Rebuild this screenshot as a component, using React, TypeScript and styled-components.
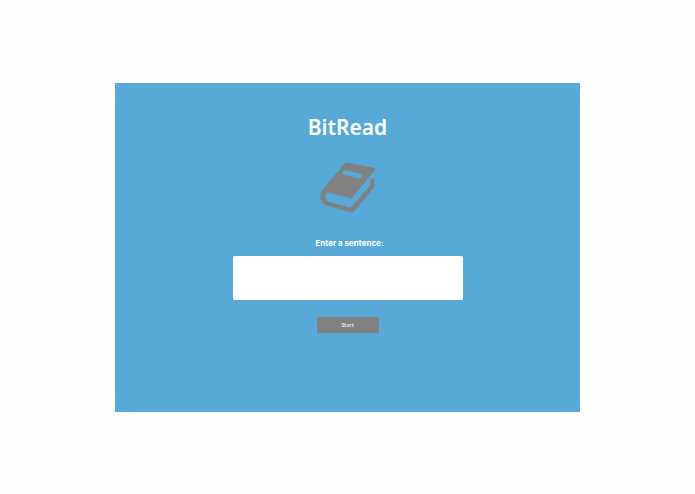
import React from "react";
import styled, { createGlobalStyle } from "styled-components";

const GlobalStyle = createGlobalStyle`
  *, *::before, *::after { box-sizing: border-box; }
  body { margin: 0; background: #fefefe; }
`;

const Page = styled.div`
  display: flex;
  min-height: 100vh;
  padding: 83px 115px 82px;
`;

const Panel = styled.main`
  flex: 1;
  display: flex;
  flex-direction: column;
  align-items: center;
  padding: 29px 16px;
  background: #57a9d7;
  color: #ffffff;
`;

const Title = styled.h1`
  margin: 0;
  font: 600 21px/30px "Noto Sans", sans-serif;
`;

const BookIcon = styled.svg`
  width: 55px;
  height: 51px;
  margin-top: 20px;
`;

const Form = styled.form`
  display: flex;
  flex-direction: column;
  align-items: center;
  width: 100%;
  margin-top: 24px;
`;

const Label = styled.label`
  padding-left: 4px;
  font: 700 8px/12px Inter, sans-serif;
`;

const SentenceInput = styled.textarea`
  width: 100%;
  max-width: 230px;
  height: 44px;
  margin-top: 7px;
  padding: 4px;
  border: 0;
  border-radius: 2px;
  background: #ffffff;
  font: 9px/12px Lato, sans-serif;
  resize: none;
`;

const StartButton = styled.button`
  width: 62px;
  height: 16px;
  margin-top: 17px;
  padding: 0;
  border: 0;
  border-radius: 1px;
  background: #818181;
  color: #ffffff;
  font: 400 6px/16px Lato, sans-serif;
`;

export default function App() {
  return (
    <>
      <GlobalStyle />
      <Page>
        <Panel>
          <Title>BitRead</Title>
          <BookIcon viewBox="270 187 164 152" aria-hidden="true">
            <path
              fill="#818181"
              fillRule="evenodd"
              d="M343 192Q347 187 353 189L429 204Q436 206 432 213L369 290Q364 296 357 294L297 279Q284 276 286 290Q286 302 298 306L355 322Q361 324 365 319L418 259L420 243Q422 235 428 235Q434 236 433 244L432 262L372 333Q367 339 360 337L291 317Q272 311 271 292Q271 279 278 269ZM343 212Q335 213 336 219Q337 224 343 225L386 236Q394 237 396 231Q398 225 391 222L350 212Z"
            />
          </BookIcon>
          <Form onSubmit={(event) => event.preventDefault()}>
            <Label htmlFor="sentence">Enter a sentence:</Label>
            <SentenceInput id="sentence" />
            <StartButton type="submit">Start</StartButton>
          </Form>
        </Panel>
      </Page>
    </>
  );
}
